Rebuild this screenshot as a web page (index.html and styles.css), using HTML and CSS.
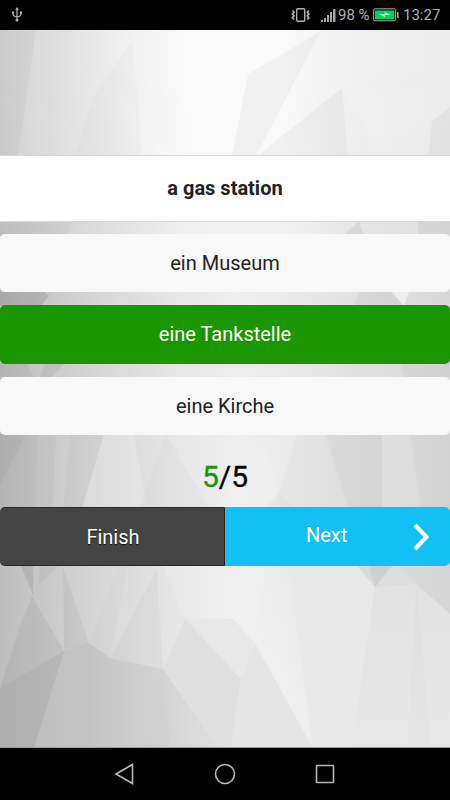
FILE: index.html
```html
<!DOCTYPE html>
<html lang="de">
<head>
<meta charset="utf-8">
<title>Quiz</title>
<link rel="stylesheet" href="styles.css">
</head>
<body>
<div class="phone">
  <header class="status">
    <svg class="usb" width="12" height="16" viewBox="0 0 12 16" fill="none" stroke="#b5b5b5" stroke-width="1.2"><path d="M6 2v11M2 5v2.2Q2 9 6 10M10 5v2.2Q10 9 6 10"/><path d="M6 0l1.8 3H4.2zM1 4.500h2v2H1zM9 4.500h2v2H9z" fill="#b5b5b5" stroke="none"/><circle cx="6" cy="13.300" r="1.400" fill="#b5b5b5" stroke="none"/></svg>
    <svg class="vibrate" width="20" height="16" viewBox="0 0 20 16" fill="none" stroke="#b0b0b0"><rect x="5.700" y="1.700" width="8" height="12.600" rx="1" stroke-width="1.400"/><path d="M1.500 3.500l1.500 1.800-1.500 1.800 1.500 1.800-1.500 1.800 1.500 1.800M17.800 3.500l-1.500 1.800 1.500 1.800-1.500 1.800 1.500 1.800-1.500 1.800" stroke-width="1.700"/></svg>
    <svg class="signal" width="16" height="15" viewBox="0 0 16 15" fill="#a5a5a5"><path d="M0 12h2v2H0zM3 10h2v4H3zM6 7h2v7H6zM9 4h2v10H9zM12 1h2.500v13H12z"/></svg>
    <span class="percent">98 %</span>
    <svg class="battery" width="26" height="14" viewBox="0 0 26 14"><rect x=".6" y=".8" width="22" height="12" rx="1.500" fill="#111" stroke="#aaa"/><path d="M2 2.500h19.200v8.800H2z" fill="#00d45b"/><path d="M6 6l6 .2-.5-2.200L17.500 7l-6-.1.700 2.400z" fill="#c8ffdc"/><path d="M24 4h1.500v6H24z" fill="#aaa"/></svg>
    <span class="clock">13:27</span>
  </header>

  <main class="quiz">
    <svg class="backdrop" viewBox="0 30 450 718" preserveAspectRatio="none" aria-hidden="true">
      <defs>
        <linearGradient id="top"><stop offset="0" stop-color="#d2d2d2"/><stop offset=".12" stop-color="#dfdfdf"/><stop offset=".3" stop-color="#f2f2f2"/><stop offset=".42" stop-color="#fafafa"/><stop offset=".62" stop-color="#fafafa"/><stop offset=".8" stop-color="#efefef"/><stop offset="1" stop-color="#ececec"/></linearGradient>
        <linearGradient id="low"><stop offset="0" stop-color="#bdbdbd"/><stop offset=".2" stop-color="#d4d4d4"/><stop offset=".4" stop-color="#e7e7e7"/><stop offset=".52" stop-color="#eeeeee"/><stop offset=".63" stop-color="#ebebeb"/><stop offset=".8" stop-color="#e0e0e0"/><stop offset="1" stop-color="#d8d8d8"/></linearGradient>
        <linearGradient id="fade" x2="0" y2="1"><stop offset="0" stop-color="#fff"/><stop offset=".18" stop-color="#eee"/><stop offset=".34" stop-color="#000"/></linearGradient>
        <linearGradient id="floor"><stop offset="0" stop-color="#b8b8b8"/><stop offset=".15" stop-color="#bdbdbd"/><stop offset=".4" stop-color="#c4c4c4"/><stop offset=".65" stop-color="#cfcfcf"/><stop offset="1" stop-color="#dedede"/></linearGradient>
        <linearGradient id="corner" x2="0" y2="1"><stop offset="0" stop-color="#e2e2e2"/><stop offset="1" stop-color="#e8e8e8"/></linearGradient>
        <linearGradient id="glow" x2="0" y2="1"><stop offset="0" stop-color="#fff" stop-opacity="0"/><stop offset="1" stop-color="#fff" stop-opacity=".3"/></linearGradient>
        <mask id="upper"><rect y="30" width="450" height="718" fill="url(#fade)"/></mask>
      </defs>
      <rect y="30" width="450" height="718" fill="url(#low)"/>
      <rect y="30" width="450" height="718" fill="url(#top)" mask="url(#upper)"/>
      <g fill="#000">
        <path d="M0 30h36L18 156H0z" opacity=".03"/>
        <path d="M133 38L142 156H75L92 98z" opacity=".014"/>
        <path d="M321 31L248 74 232 156h24z" opacity=".035"/>
        <path d="M342 88L258 155h90z" opacity=".035"/>
        <path d="M342 88L348 155h18l4-22z" opacity=".006"/>
        <path d="M450 107L432 121 428 156h22z" opacity=".035"/>
        <path d="M0 221h72l-4 14H0z" opacity=".03"/>
        <path d="M359 221l-16 14h21z" opacity=".06"/>
        <path d="M418 221h32v14h-32z" opacity=".05"/>
        <path d="M0 292h45l4 4-8 10H0z" opacity=".1"/>
        <path d="M359 292l-5 14h50l-10-14z" opacity=".04"/>
        <path d="M0 363h26l8 14H0z" opacity=".05"/>
        <path d="M45 363h20l-13 14H40z" opacity=".05"/>
        <path d="M400 363h50v14h-46z" opacity=".03"/>
        <path d="M0 434h26L0 485z" opacity=".08"/>
        <path d="M38 434l-3 74H0v-23l26-51z" opacity=".045"/>
        <path d="M38 434h18l-3 74H35z" opacity=".025"/>
        <path d="M70 434h34L82 508H63z" opacity=".02"/>
        <path d="M166 434l-22 60 3 14h63z" opacity=".015"/>
        <path d="M325 434h57v74h-34z" opacity=".045"/>
        <path d="M297 434h28l23 74h-69v-16z" opacity=".015"/>
        <path d="M410 434h40v74h-29z" opacity=".02"/>
        <path d="M279 492l17 16h-29z" opacity=".015"/>
      </g>
      <path d="M265 443l14 49-16 16h-45z" fill="#fff" opacity=".1"/>
      <path d="M104 434h30l10 60-4 14H82z" fill="#fff" opacity=".18"/>
      <path d="M391 292h18l-5 14z" fill="#fff" opacity=".5"/>
      <path d="M163 566h103l-11 77-14 36-56-60z" fill="#fff" opacity=".12"/>
      <path d="M185 619h48l22 24-14 36z" fill="#e8e8e8"/>
      <path d="M185 619L241 679 231 748H163v-79z" fill="#e0e0e0"/>
      <path d="M0 688L64 651 89 643 110 658 163 669 218 748H0z" fill="url(#floor)"/>
      <g fill="#000">
        <path d="M21 566h12v29z" opacity=".08"/>
        <path d="M0 688L32 596 64 651z" opacity=".02"/>
        <path d="M32 596L64 651 0 688 18 630z" opacity=".03"/>
        <path d="M0 688L64 651 34 748H0z" opacity=".05"/>
        <path d="M63 568l26 75-25 8z" opacity=".04"/>
        <path d="M38 586l20-20h-19z" opacity=".03"/>
        <path d="M89 643l29-77h10L110 658z" opacity=".012"/>
        <path d="M157 569l-47 89 53 11z" opacity=".025"/>
        <path d="M163 669l-20 79h28z" opacity=".008"/>
        <path d="M355 566l20 21 16-21z" opacity=".025"/>
        <path d="M369 566l6 21 18-21z" opacity=".045"/>
        <path d="M416 584l34 30v-48h-54z" opacity=".01"/>
      </g>
      <path d="M289 566h68l18 21-62 161z" fill="#e9e9e9"/>
      <path d="M375 587L352 748h-39z" fill="#e9e9e9"/>
      <path d="M375 587l41-3 34 30v134H352z" fill="url(#corner)"/>
      <path d="M416 584l16 164h-25z" fill="#000" opacity=".01"/>
      <path d="M255 643l-14 36-10 69h82z" fill="#e5e5e5"/>
      <path d="M266 566h23l24 182-58-105z" fill="url(#glow)"/>
      <path d="M0 747.500h450" stroke="#999"/>
    </svg>

    <h1 class="question">a gas station</h1>
    <div class="options">
      <button class="option">ein Museum</button>
      <button class="option correct">eine Tankstelle</button>
      <button class="option">eine Kirche</button>
    </div>
    <p class="score"><span class="right">5</span>/5</p>
    <div class="actions">
      <button class="finish">Finish</button>
      <button class="next"><span>Next</span>
        <svg class="chevron" width="18" height="28" viewBox="0 0 18 28" fill="none" stroke="#fff" stroke-width="4"><path d="M2 2L13.500 14 2 26"/></svg>
      </button>
    </div>
  </main>

  <nav class="navbar">
    <svg width="22" height="22" viewBox="0 0 22 22"><path d="M2 11L18.500 1.500v19z"/></svg>
    <svg width="22" height="22" viewBox="0 0 22 22"><circle cx="11" cy="11" r="9.500"/></svg>
    <svg width="22" height="22" viewBox="0 0 22 22"><rect x="2.500" y="2.500" width="17" height="17" rx=".5"/></svg>
  </nav>
</div>
</body>
</html>
```

FILE: styles.css
```css
* { box-sizing: border-box; }

body {
  margin: 0;
  font-family: Roboto, "Liberation Sans", sans-serif;
}

.phone {
  width: 450px;
  height: 800px;
  display: flex;
  flex-direction: column;
  overflow: hidden;
}

.status {
  height: 30px;
  flex: none;
  display: flex;
  align-items: center;
  padding: 0 11px 0 11px;
  background: #000;
  color: #b0b0b0;
  font-size: 15px;
  line-height: 30px;
}
.vibrate { margin-left: auto; }
.signal { margin-left: 10px; }
.percent { width: 32px; margin-left: 1px; white-space: nowrap; }
.battery { margin-left: 3px; }
.clock { width: 36px; margin-left: 4px; }

.quiz {
  position: relative;
  z-index: 0;
  flex: 1;
  padding-top: 125px;
}
.backdrop {
  position: absolute;
  inset: 0;
  z-index: -1;
  width: 100%;
  height: 100%;
}

.question {
  height: 67px;
  margin: 0;
  border: solid #d8d8d8;
  border-width: 1px 0;
  background: #fff;
  color: #222;
  font-size: 20px;
  font-weight: 700;
  line-height: 65px;
  text-align: center;
}

.options {
  display: grid;
  gap: 13px;
  padding-top: 12px;
}

button {
  border: 0;
  padding: 0;
  font: 20px/58px Roboto, "Liberation Sans", sans-serif;
}
.option {
  height: 58.300px;
  border-radius: 5px;
  background: #f8f8f8;
  color: #222;
}
.option.correct {
  background: #1c9600;
  color: #fff;
}

.score {
  margin: 0;
  height: 72.600px;
  padding-top: 5px;
  font-size: 30px;
  line-height: 73px;
  text-align: center;
  -webkit-text-stroke: .3px currentColor;
}
.right { color: #1c9600; }

.actions {
  display: grid;
  grid-template-columns: 1fr 1fr;
  grid-template-rows: 58.500px;
}
.finish {
  border: solid #292929;
  border-width: 1px 1px 1px 0;
  border-right-color: #3b1714;
  border-radius: 5px 0 0 5px;
  padding-left: 2px;
  background: #444;
  color: #fff;
  line-height: 56px;
  text-shadow: 0 1px 1px #111;
}
.next {
  display: flex;
  align-items: center;
  justify-content: space-between;
  padding: 0 19px 0 81px;
  border-radius: 0 5px 5px 0;
  background: #12c0f5;
  color: #fff;
  line-height: 24px;
}
.next span { margin-top: -4px; }

.navbar {
  height: 52px;
  flex: none;
  display: flex;
  justify-content: center;
  align-items: center;
  gap: 78px;
  background: #000;
}
.navbar svg {
  fill: none;
  stroke: #b8b8b8;
  stroke-width: 1.600;
}
```
